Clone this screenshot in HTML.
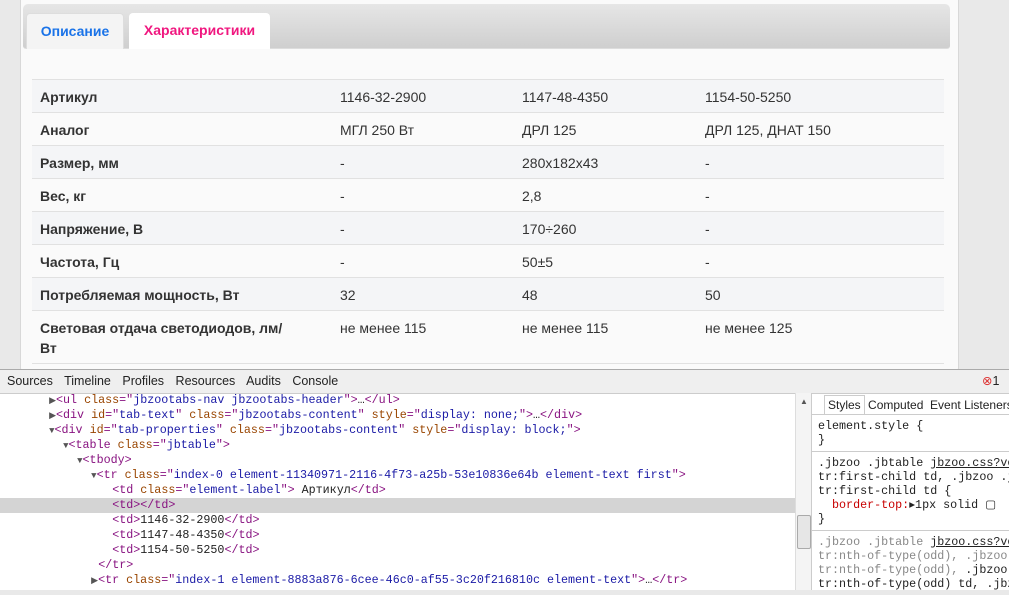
<!DOCTYPE html>
<html><head><meta charset="utf-8"><style>
*{margin:0;padding:0;box-sizing:border-box}
body{width:1009px;height:590px;overflow:hidden;background:#e9e9e9;font-family:"Liberation Sans",Arial,sans-serif;position:relative}
.panel{position:absolute;left:20px;top:-6px;width:939px;height:380px;background:#fafafa;border:1px solid #d8d8d8;border-radius:6px}
.tabbar{position:absolute;left:23px;top:4px;width:927px;height:45px;background:linear-gradient(#e6e6e6,#cfcfcf);border-radius:5px 5px 3px 3px;border-bottom:1px solid #ddd}
.tab{position:absolute;top:13px;height:36px;border-radius:4px 4px 0 0;font-weight:bold;font-size:14px;line-height:34px;text-align:center}
.t1{left:26px;width:98px;background:#f4f4f4;color:#1a73e8;border:1px solid #ddd;border-bottom:none}
.t2{left:129px;width:141px;background:#fff;color:#f0177f}
table{position:absolute;left:32px;top:79px;width:912px;border-collapse:collapse;font-size:14px;color:#333}
td{border-top:1px solid #e1e1e1;height:33px;padding:0 8px;vertical-align:top;padding-top:7px;line-height:20px}
tr:nth-child(odd) td{background:#f4f5f7}
tr:nth-child(even) td{background:#fafafa}
td.l{font-weight:bold;width:300px}
tr.last td{height:53px;border-bottom:1px solid #e1e1e1}
.dt{position:absolute;left:0;top:369px;width:1009px;height:221px;background:#fff}
.bar{height:25px;background:#efefef;border-top:1px solid #aaa;border-bottom:1px solid #ccc;font-family:"Liberation Sans","DejaVu Sans",sans-serif;font-size:12.5px;line-height:23px;padding-left:7px;color:#222}
.bar span{margin-right:8px}
.tree{position:absolute;left:7px;top:24px;width:788px;height:197px;font-family:"Liberation Mono",monospace;font-size:11.7px;line-height:15px}
.ln{height:15px;white-space:pre;color:#222}
.hl{background:#d4d4d4;margin-left:-7px;padding-left:7px}
.g{color:#881280}.a{color:#994500}.v{color:#1a1aa6}
.ar{color:#555;font-size:9px}
.sb{position:absolute;left:795px;top:24px;width:17px;height:197px;background:#f4f4f4;border-left:1px solid #ddd;border-right:1px solid #ccc}
.side{position:absolute;left:812px;top:24px;width:197px;height:197px;font-family:"Liberation Mono",monospace;font-size:11.7px;line-height:14px;color:#222}
</style></head><body>
<div class="panel"></div>
<div class="tabbar"></div>
<div class="tab t1">Описание</div>
<div class="tab t2">Характеристики</div>
<table>
<tr><td class="l">Артикул</td><td style="width:182px">1146-32-2900</td><td style="width:183px">1147-48-4350</td><td>1154-50-5250</td></tr>
<tr><td class="l">Аналог</td><td>МГЛ 250 Вт</td><td>ДРЛ 125</td><td>ДРЛ 125, ДНАТ 150</td></tr>
<tr><td class="l">Размер, мм</td><td>-</td><td>280x182x43</td><td>-</td></tr>
<tr><td class="l">Вес, кг</td><td>-</td><td>2,8</td><td>-</td></tr>
<tr><td class="l">Напряжение, В</td><td>-</td><td>170÷260</td><td>-</td></tr>
<tr><td class="l">Частота, Гц</td><td>-</td><td>50±5</td><td>-</td></tr>
<tr><td class="l">Потребляемая мощность, Вт</td><td>32</td><td>48</td><td>50</td></tr>
<tr class="last"><td class="l">Световая отдача светодиодов, лм/<br>Вт</td><td>не менее 115</td><td>не менее 115</td><td>не менее 125</td></tr>
</table>
<div class="dt">
<div class="bar"><span>Sources</span> <span>Timeline</span> <span>Profiles</span> <span>Resources</span> <span>Audits</span> <span>Console</span><span style="position:absolute;left:982px;top:1px;color:#d33">⊗<span style="color:#222">1</span></span></div>
<div class="tree">
<div class="ln">      <span class="ar">▶</span><span class="g">&lt;ul </span><span class="a">class</span><span class="g">="</span><span class="v">jbzootabs-nav jbzootabs-header</span><span class="g">"&gt;</span>…<span class="g">&lt;/ul&gt;</span></div>
<div class="ln">      <span class="ar">▶</span><span class="g">&lt;div </span><span class="a">id</span><span class="g">="</span><span class="v">tab-text</span><span class="g">" </span><span class="a">class</span><span class="g">="</span><span class="v">jbzootabs-content</span><span class="g">" </span><span class="a">style</span><span class="g">="</span><span class="v">display: none;</span><span class="g">"&gt;</span>…<span class="g">&lt;/div&gt;</span></div>
<div class="ln">      <span class="ar">▼</span><span class="g">&lt;div </span><span class="a">id</span><span class="g">="</span><span class="v">tab-properties</span><span class="g">" </span><span class="a">class</span><span class="g">="</span><span class="v">jbzootabs-content</span><span class="g">" </span><span class="a">style</span><span class="g">="</span><span class="v">display: block;</span><span class="g">"&gt;</span></div>
<div class="ln">        <span class="ar">▼</span><span class="g">&lt;table </span><span class="a">class</span><span class="g">="</span><span class="v">jbtable</span><span class="g">"&gt;</span></div>
<div class="ln">          <span class="ar">▼</span><span class="g">&lt;tbody&gt;</span></div>
<div class="ln">            <span class="ar">▼</span><span class="g">&lt;tr </span><span class="a">class</span><span class="g">="</span><span class="v">index-0 element-11340971-2116-4f73-a25b-53e10836e64b element-text first</span><span class="g">"&gt;</span></div>
<div class="ln">               <span class="g">&lt;td </span><span class="a">class</span><span class="g">="</span><span class="v">element-label</span><span class="g">"&gt;</span> Артикул<span class="g">&lt;/td&gt;</span></div>
<div class="ln hl">               <span class="g">&lt;td&gt;&lt;/td&gt;</span></div>
<div class="ln">               <span class="g">&lt;td&gt;</span>1146-32-2900<span class="g">&lt;/td&gt;</span></div>
<div class="ln">               <span class="g">&lt;td&gt;</span>1147-48-4350<span class="g">&lt;/td&gt;</span></div>
<div class="ln">               <span class="g">&lt;td&gt;</span>1154-50-5250<span class="g">&lt;/td&gt;</span></div>
<div class="ln">             <span class="g">&lt;/tr&gt;</span></div>
<div class="ln">            <span class="ar">▶</span><span class="g">&lt;tr </span><span class="a">class</span><span class="g">="</span><span class="v">index-1 element-8883a876-6cee-46c0-af55-3c20f216810c element-text</span><span class="g">"&gt;</span>…<span class="g">&lt;/tr&gt;</span></div>
</div>
<div class="sb"><div style="position:absolute;left:4px;top:4px;font-size:8px;color:#555">▲</div><div style="position:absolute;left:1px;top:122px;width:14px;height:34px;background:#e6e6e6;border:1px solid #aaa;border-radius:2px"></div></div>
<div class="side">
<div style="font-family:'Liberation Sans',sans-serif;font-size:12px;height:22px;border-bottom:1px solid #ccc;padding-top:5px;padding-left:12px;white-space:nowrap"><span style="border:1px solid #ccc;border-bottom:none;padding:2px 3px;background:#fff">Styles</span> Computed &nbsp;Event Listeners</div>
<div style="padding:4px 6px;border-bottom:1px solid #ccc">element.style {<br>}</div>
<div style="padding:4px 6px;border-bottom:1px solid #ccc;white-space:nowrap">.jbzoo .jbtable <u>jbzoo.css?ve</u><br>tr:first-child td, .jbzoo .j<br>tr:first-child td {<br>&nbsp;&nbsp;<span style="color:#c80000">border-top:</span>▸1px solid ▢<br>}</div>
<div style="padding:4px 6px;color:#888;white-space:nowrap">.jbzoo .jbtable <u style="color:#222">jbzoo.css?ve</u><br>tr:nth-of-type(odd), .jbzoo<br>tr:nth-of-type(odd), <span style="color:#222">.jbzoo</span><br><span style="color:#222">tr:nth-of-type(odd) td, .jbz</span></div>
</div>
</div>
</body></html>
